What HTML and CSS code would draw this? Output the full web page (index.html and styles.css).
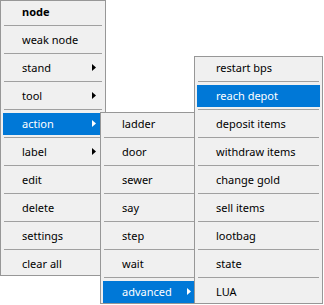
FILE: index.html
```html
<!DOCTYPE html>
<html lang="en">
<head>
  <meta charset="UTF-8" />
  <title>Node menu</title>
  <link rel="stylesheet" href="styles.css">
</head>
<body>
  <div class="desk">
    <ul class="menu main-menu">
      <li class="item bold">node</li>
      <li class="sep"></li>
      <li class="item">weak node</li>
      <li class="sep"></li>
      <li class="item has-sub">stand<span class="arrow"></span></li>
      <li class="sep"></li>
      <li class="item has-sub">tool<span class="arrow"></span></li>
      <li class="sep"></li>
      <li class="item has-sub active">action<span class="arrow"></span></li>
      <li class="sep"></li>
      <li class="item has-sub">label<span class="arrow"></span></li>
      <li class="sep"></li>
      <li class="item">edit</li>
      <li class="sep"></li>
      <li class="item">delete</li>
      <li class="sep"></li>
      <li class="item">settings</li>
      <li class="sep"></li>
      <li class="item">clear all</li>
    </ul>

    <ul class="menu sub action-menu">
      <li class="item">ladder</li>
      <li class="sep"></li>
      <li class="item">door</li>
      <li class="sep"></li>
      <li class="item">sewer</li>
      <li class="sep"></li>
      <li class="item">say</li>
      <li class="sep"></li>
      <li class="item">step</li>
      <li class="sep"></li>
      <li class="item">wait</li>
      <li class="sep"></li>
      <li class="item has-sub active">advanced<span class="arrow"></span></li>
    </ul>

    <ul class="menu sub advanced-menu">
      <li class="item">restart bps</li>
      <li class="sep"></li>
      <li class="item active">reach depot</li>
      <li class="sep"></li>
      <li class="item">deposit items</li>
      <li class="sep"></li>
      <li class="item">withdraw items</li>
      <li class="sep"></li>
      <li class="item">change gold</li>
      <li class="sep"></li>
      <li class="item">sell items</li>
      <li class="sep"></li>
      <li class="item">lootbag</li>
      <li class="sep"></li>
      <li class="item">state</li>
      <li class="sep"></li>
      <li class="item">LUA</li>
    </ul>
  </div>
</body>
</html>
```

FILE: styles.css
```css
body {
  margin: 0;
  background: #fff;
  font-family: "Noto Sans", "Open Sans", sans-serif;
  font-size: 11px;
  color: #000;
}

.desk {
  position: relative;
  width: 324px;
  height: 305px;
  overflow: hidden;
}

.menu {
  list-style: none;
  margin: 0;
  padding: 0 2px;
  background: #f0f0f0;
  border: 1px solid #979797;
  box-sizing: border-box;
}

.main-menu {
  width: 106px;
}

.sub {
  position: absolute;
}

.action-menu {
  left: 100px;
  top: 112px;
  width: 101px;
}

.advanced-menu {
  left: 194px;
  top: 56px;
  width: 129px;
}

.item {
  display: flex;
  align-items: center;
  box-sizing: border-box;
  height: 22px;
  padding: 0 7px 1px 19px;
  white-space: nowrap;
}

.bold {
  font-weight: bold;
}

.active {
  background: #0078d7;
  color: #fff;
}

.sep {
  height: 1px;
  margin: 2px 1px 3px 1px;
  background: #a0a0a0;
}

.arrow {
  margin-left: auto;
  width: 4px;
  height: 7px;
  background: #000;
  clip-path: polygon(0 0, 100% 50%, 0 100%);
}

.active .arrow {
  background: #fff;
}
```
